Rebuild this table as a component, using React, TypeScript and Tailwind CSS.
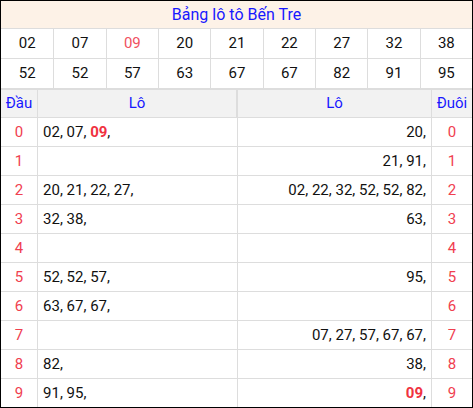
const firstRow = ["02", "07", "09", "20", "21", "22", "27", "32", "38"];
const secondRow = ["52", "52", "57", "63", "67", "67", "82", "91", "95"];

// [đầu list, đuôi list]
const rows: [string[], string[]][] = [
  [["02", "07", "09"], ["20"]],
  [[], ["21", "91"]],
  [["20", "21", "22", "27"], ["02", "22", "32", "52", "52", "82"]],
  [["32", "38"], ["63"]],
  [[], []],
  [["52", "52", "57"], ["95"]],
  [["63", "67", "67"], []],
  [[], ["07", "27", "57", "67", "67"]],
  [["82"], ["38"]],
  [["91", "95"], ["09"]],
];

const SPECIAL = "09";

function NumList({ items }: { items: string[] }) {
  return (
    <span className="whitespace-pre">
      {items.map((n, i) => (
        <span key={i}>
          {n === SPECIAL ? (
            <span className="font-bold text-[#f0323f]">{n}</span>
          ) : (
            n
          )}
          {i < items.length - 1 ? ", " : ","}
        </span>
      ))}
    </span>
  );
}

export default function App() {
  return (
    <div
      className="w-[473px] h-[408px] border border-black bg-white text-[15px] text-[#111]"
      style={{ fontFamily: "Roboto, 'Liberation Sans', sans-serif" }}
    >
      <div className="h-[28px] border-b border-[#dddddd] bg-[#fdf2e7] flex items-center justify-center text-[16px] text-[#1818ff]">
        Bảng lô tô Bến Tre
      </div>

      {[firstRow, secondRow].map((row, r) => (
        <div
          key={r}
          className={[
            "grid grid-cols-9",
            r === 0 ? "h-[30px] border-b border-[#dddddd]" : "h-[29px]",
          ].join(" ")}
        >
          {row.map((n, i) => (
            <div
              key={i}
              className={[
                "flex items-center justify-center",
                i > 0 ? "border-l border-[#dddddd]" : "",
                n === SPECIAL && r === 0 ? "text-[#f0505f]" : "",
              ].join(" ")}
            >
              {n}
            </div>
          ))}
        </div>
      ))}

      <div className="border-t-2 border-[#dddddd]">
        <div className="flex h-[28px] bg-[#f2f2f2] border-b border-[#dddddd] text-[#1818ff]">
          <div className="w-[37px] flex items-center justify-center border-r border-[#dddddd]">
            Đầu
          </div>
          <div className="w-[200px] flex items-center justify-center border-r-2 border-[#dddddd]">
            Lô
          </div>
          <div className="w-[194px] flex items-center justify-center border-r border-[#dddddd]">
            Lô
          </div>
          <div className="w-[40px] flex items-center justify-center">Đuôi</div>
        </div>

        {rows.map(([dau, duoi], i) => (
          <div
            key={i}
            className={[
              "flex",
              i < rows.length - 1 ? "h-[29px] border-b border-[#dddddd]" : "h-[28px]",
            ].join(" ")}
          >
            <div className="w-[37px] flex items-center justify-center border-r border-[#dddddd] text-[#f0404f]">
              {i}
            </div>
            <div className="w-[200px] flex items-center pl-[5px] border-r border-[#dddddd]">
              <NumList items={dau} />
            </div>
            <div className="w-[194px] flex items-center justify-end pr-[5px] border-r border-[#dddddd]">
              <NumList items={duoi} />
            </div>
            <div className="w-[40px] flex items-center justify-center text-[#f0404f]">
              {i}
            </div>
          </div>
        ))}
      </div>
    </div>
  );
}
